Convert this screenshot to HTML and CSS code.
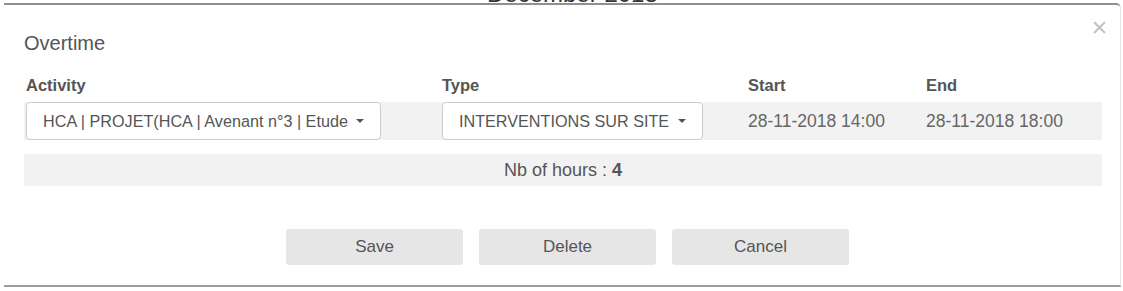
FILE: index.html
```html
<!DOCTYPE html>
<html lang="en">
<head>
  <meta charset="UTF-8">
  <title>Overtime</title>
  <link rel="stylesheet" href="styles.css">
</head>
<body>
  <div class="calendar-title">December 2018</div>

  <div class="modal">
    <button class="close" type="button" aria-label="Close">
      <svg width="15" height="15" viewBox="0 0 15 15"><path d="M2 2L13 13M13 2L2 13" stroke="#c4c4c4" stroke-width="2.2" fill="none"/></svg>
    </button>
    <h4 class="modal-title">Overtime</h4>

    <div class="grid">
      <div class="th">Activity</div>
      <div class="th">Type</div>
      <div class="th">Start</div>
      <div class="th">End</div>

      <div class="td"><span class="select">HCA | PROJET(HCA | Avenant n°3 | Etude <span class="caret"></span></span></div>
      <div class="td"><span class="select">INTERVENTIONS SUR SITE <span class="caret"></span></span></div>
      <div class="td date">28-11-2018 14:00</div>
      <div class="td date">28-11-2018 18:00</div>
    </div>

    <div class="hours">Nb of hours : <b>4</b></div>

    <div class="actions">
      <button type="button" class="btn">Save</button>
      <button type="button" class="btn">Delete</button>
      <button type="button" class="btn">Cancel</button>
    </div>
  </div>
</body>
</html>
```

FILE: styles.css
```css
body {
  margin: 0;
  font-family: "Liberation Sans", Arial, sans-serif;
  background-color: #fff;
  color: #555;
}
.calendar-title {
  position: absolute;
  left: 487px;
  top: -18px;
  z-index: 2;
  font-size: 24px;
  line-height: 24px;
  color: #333;
}
.modal {
  position: relative;
  margin: 3px 0 0 4px;
  width: 1117px;
  box-sizing: border-box;
  padding: 0 18px 20px 20px;
  background-color: #fff;
  border-top: 2px solid #8f8f8f;
  border-bottom: 2px solid #9c9c9c;
  border-right: 1px solid #e4e4e4;
  border-top-right-radius: 5px;
}
.close {
  position: absolute;
  top: 15px;
  right: 13px;
  padding: 0;
  border: none;
  background: none;
  line-height: 0;
}
.modal-title {
  margin: 26px 0 0;
  font-size: 20px;
  font-weight: normal;
  line-height: 24px;
  color: #555;
}
.grid {
  display: grid;
  grid-template-columns: 416px 306px 178px 178px;
  margin-top: 20px;
}
.th {
  padding: 0 0 7px 2px;
  font-size: 16.5px;
  font-weight: bold;
  line-height: 20px;
  color: #555;
}
.td {
  display: flex;
  align-items: center;
  height: 38px;
  padding-left: 2px;
  background-color: #f2f2f2;
}
.date {
  font-size: 17.5px;
  color: #666;
}
.select {
  display: inline-flex;
  align-items: center;
  height: 38px;
  box-sizing: border-box;
  padding: 0 16px;
  background-color: #fff;
  border: 1px solid #ccc;
  border-radius: 4px;
  font-size: 16.2px;
  color: #555;
  white-space: pre;
}
.caret {
  display: inline-block;
  width: 0;
  height: 0;
  margin-left: 4px;
  border-top: 4px solid #555;
  border-left: 4px solid transparent;
  border-right: 4px solid transparent;
}
.hours {
  margin-top: 14px;
  height: 32px;
  line-height: 32px;
  text-align: center;
  background-color: #f2f2f2;
  font-size: 18px;
  color: #555;
}
.actions {
  display: flex;
  justify-content: center;
  gap: 16px;
  margin-top: 43px;
  padding-left: 9px;
}
.btn {
  width: 177px;
  height: 36px;
  border: none;
  border-radius: 3px;
  background-color: #e6e6e6;
  font-family: "Liberation Sans", Arial, sans-serif;
  font-size: 17px;
  color: #555;
  cursor: pointer;
}
.btn:hover {
  background-color: #ddd;
}
```
